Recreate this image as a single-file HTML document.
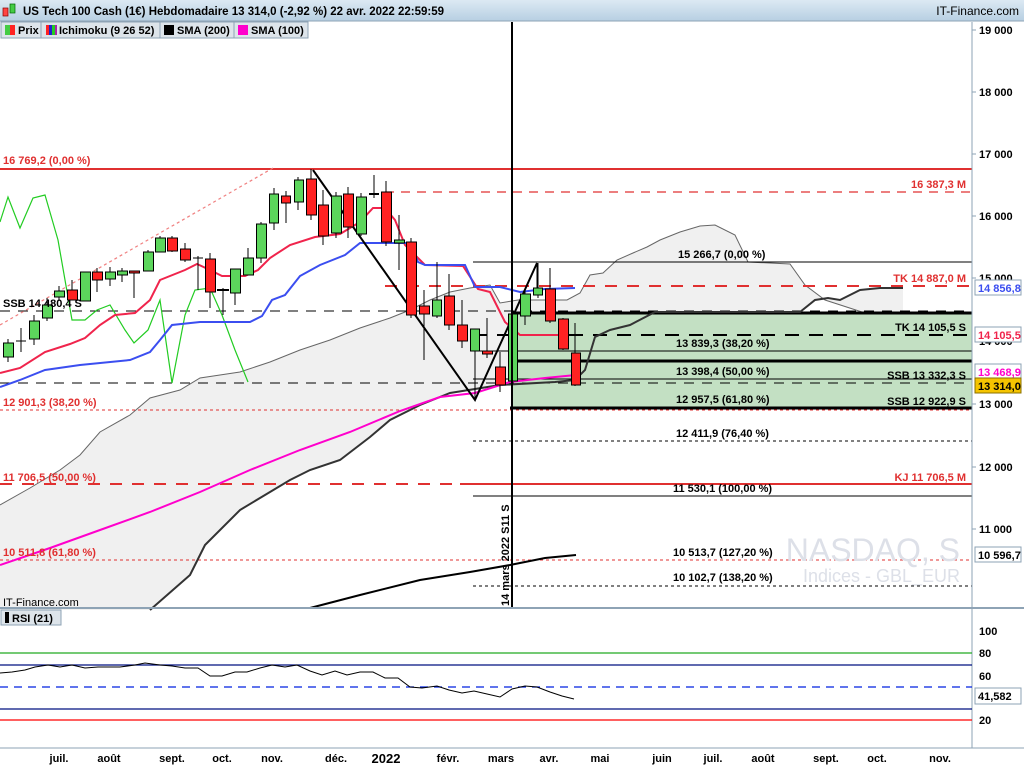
<!DOCTYPE html>
<html><head><meta charset="utf-8"><style>
body{margin:0;width:1024px;height:768px;overflow:hidden;background:#fff;font-family:"Liberation Sans",sans-serif}
svg{display:block;font-family:"Liberation Sans",sans-serif;font-weight:bold;font-size:11px}
</style></head><body>
<svg width="1024" height="768" viewBox="0 0 1024 768">
<defs><linearGradient id="hd" x1="0" y1="0" x2="0" y2="1"><stop offset="0" stop-color="#dce9f3"/><stop offset="1" stop-color="#b7cfe2"/></linearGradient></defs>
<rect x="0" y="0" width="1024" height="21" fill="url(#hd)"/>
<line x1="0" y1="21" x2="1024" y2="21" stroke="#8ea3b5"/>
<rect x="3" y="8" width="5" height="8" fill="#f44" stroke="#800" stroke-width="0.7"/><rect x="10" y="4" width="5" height="9" fill="#4c4" stroke="#060" stroke-width="0.7"/>
<text x="23" y="15" font-size="11.5" fill="#000">US Tech 100 Cash (1€) Hebdomadaire 13 314,0 (-2,92 %) 22 avr. 2022 22:59:59</text>
<text x="1019" y="15" font-size="12" text-anchor="end" font-weight="normal" fill="#000">IT-Finance.com</text>

<polygon fill="#f0f0f0" points="0,505 30,488 60,470 80,455 100,432 130,415 150,398 180,390 200,378 240,372 270,362 300,350 330,340 360,328 390,318 410,310 430,300 450,292 470,288 490,285 500,303 518,300 567,300 580,293 590,275 603,273 617,260 633,253 647,247 660,240 680,232 700,226 715,225 735,235 748,262 790,264 805,285 825,300 862,312 903,312 903,288 880,288 860,290 840,300 828,298 815,300 800,312 655,312 630,325 610,330 595,337 585,370 575,380 555,382 500,385 450,393 420,405 390,420 370,437 340,460 310,470 290,480 265,495 240,510 205,545 190,575 150,610 0,610"/>
<polyline fill="none" stroke="#666" stroke-width="1" points="0,505 30,488 60,470 80,455 100,432 130,415 150,398 180,390 200,378 240,372 270,362 300,350 330,340 360,328 390,318 410,310 430,300 450,292 470,288 490,285 500,303 518,300 567,300 580,293 590,275 603,273 617,260 633,253 647,247 660,240 680,232 700,226 715,225 735,235 748,262 790,264 805,285 825,300 862,312"/>

<rect x="513" y="313" width="459" height="96" fill="#c3e0c3"/>

<line x1="0" y1="169" x2="972" y2="169" stroke="#e03030" stroke-width="2"/>
<line x1="385" y1="192" x2="972" y2="192" stroke="#e03030" stroke-width="1.2" stroke-dasharray="9,7"/>
<line x1="473" y1="262" x2="972" y2="262" stroke="#000" stroke-width="1"/>
<line x1="385" y1="286" x2="972" y2="286" stroke="#e03030" stroke-width="2" stroke-dasharray="12,10"/>
<line x1="0" y1="311" x2="972" y2="311" stroke="#000" stroke-width="1" stroke-dasharray="10,8"/>
<line x1="513" y1="313" x2="972" y2="313" stroke="#000" stroke-width="3"/>
<line x1="473" y1="335" x2="972" y2="335" stroke="#000" stroke-width="2" stroke-dasharray="14,10"/>
<line x1="473" y1="351" x2="972" y2="351" stroke="#000" stroke-width="1"/>
<line x1="510" y1="361" x2="972" y2="361" stroke="#000" stroke-width="3"/>
<line x1="473" y1="379" x2="972" y2="379" stroke="#000" stroke-width="1"/>
<line x1="0" y1="383" x2="972" y2="383" stroke="#000" stroke-width="1" stroke-dasharray="10,8"/>
<line x1="510" y1="408" x2="972" y2="408" stroke="#000" stroke-width="3"/>
<line x1="0" y1="410" x2="972" y2="410" stroke="#e03030" stroke-width="1" stroke-dasharray="3,3"/>
<line x1="473" y1="441" x2="972" y2="441" stroke="#000" stroke-width="1" stroke-dasharray="3,3"/>
<line x1="0" y1="484" x2="460" y2="484" stroke="#e03030" stroke-width="2" stroke-dasharray="12,10"/>
<line x1="460" y1="484" x2="972" y2="484" stroke="#e03030" stroke-width="2"/>
<line x1="473" y1="496" x2="972" y2="496" stroke="#000" stroke-width="1"/>
<line x1="0" y1="560" x2="972" y2="560" stroke="#e03030" stroke-width="1" stroke-dasharray="3,3"/>
<line x1="473" y1="586" x2="972" y2="586" stroke="#000" stroke-width="1" stroke-dasharray="3,3"/>

<line x1="0" y1="325" x2="273" y2="168" stroke="#f08080" stroke-width="1.2" stroke-dasharray="3,3"/>

<polyline fill="none" stroke="#333" stroke-width="2" points="150,610 190,575 205,545 240,510 265,495 290,480 310,470 340,460 370,437 390,420 420,405 450,393 500,385 555,382 575,380 585,370 595,337 610,330 630,325 655,312 800,312 815,300 828,298 840,300 860,290 880,288 903,288"/>

<polyline fill="none" stroke="#2c2" stroke-width="1.2" points="0,222 8,197 20,228 33,198 45,195 58,240 72,320 85,320 97,310 110,305 125,330 134,343 148,330 160,300 172,383 185,315 195,290 210,288 222,315 235,350 248,382"/>
<polyline fill="none" stroke="#f0244c" stroke-width="2" points="0,373 20,368 45,352 70,344 85,338 100,325 115,315 135,313 150,300 160,280 185,270 197,264 210,270 222,276 245,276 258,270 270,258 290,245 315,237 340,234 360,222 373,208 385,208 395,220 405,245 415,255 425,265 463,266 478,289 490,292 505,322 520,335 568,335"/>
<polyline fill="none" stroke="#3b4ef0" stroke-width="2" points="0,387 20,380 45,370 80,365 130,360 150,352 160,340 172,325 200,322 250,322 262,316 272,300 285,295 300,276 320,265 345,255 360,243 410,243 418,262 425,265 465,265 475,287 500,287 520,292 545,289 575,288"/>
<polyline fill="none" stroke="#f0c" stroke-width="2" points="0,565 50,548 100,530 150,512 200,492 250,470 300,450 350,432 400,411 440,397 475,393 510,382 545,378 576,375"/>
<polyline fill="none" stroke="#000" stroke-width="2" points="310,608 360,595 420,580 470,572 510,565 545,558 576,555"/>
<polyline fill="none" stroke="#000" stroke-width="2" points="313,170 475,400 537,263"/>
<line x1="537" y1="263" x2="537" y2="290" stroke="#000" stroke-width="1"/>

<g stroke="#000" stroke-width="1">
<line x1="8" y1="339" x2="8" y2="362"/><rect x="3.5" y="343" width="10" height="14" fill="#5cd65c"/>
<line x1="21" y1="328" x2="21" y2="352"/><line x1="16" y1="341" x2="26" y2="341"/>
<line x1="34" y1="315" x2="34" y2="345"/><rect x="29.5" y="321" width="10" height="18" fill="#5cd65c"/>
<line x1="47" y1="298" x2="47" y2="321"/><rect x="42.5" y="305" width="10" height="13" fill="#5cd65c"/>
<line x1="59" y1="286" x2="59" y2="300"/><rect x="54.5" y="291" width="10" height="6" fill="#5cd65c"/>
<line x1="72" y1="280" x2="72" y2="300"/><rect x="67.5" y="290" width="10" height="10" fill="#f22"/>
<line x1="85" y1="272" x2="85" y2="301"/><rect x="80.5" y="272" width="10" height="29" fill="#5cd65c"/>
<line x1="97" y1="268" x2="97" y2="292"/><rect x="92.5" y="272" width="10" height="8" fill="#f22"/>
<line x1="110" y1="267" x2="110" y2="286"/><rect x="105.5" y="272" width="10" height="7" fill="#5cd65c"/>
<line x1="122" y1="268" x2="122" y2="282"/><rect x="117.5" y="271" width="10" height="4" fill="#5cd65c"/>
<line x1="134" y1="271" x2="134" y2="298"/><rect x="129.5" y="271" width="10" height="2" fill="#f22"/>
<line x1="148" y1="250" x2="148" y2="271"/><rect x="143.5" y="252" width="10" height="19" fill="#5cd65c"/>
<line x1="160" y1="236" x2="160" y2="252"/><rect x="155.5" y="238" width="10" height="14" fill="#5cd65c"/>
<line x1="172" y1="236" x2="172" y2="252"/><rect x="167.5" y="238" width="10" height="13" fill="#f22"/>
<line x1="185" y1="243" x2="185" y2="262"/><rect x="180.5" y="249" width="10" height="11" fill="#f22"/>
<line x1="198" y1="256" x2="198" y2="290"/><line x1="193" y1="258" x2="203" y2="258"/>
<line x1="210" y1="253" x2="210" y2="308"/><rect x="205.5" y="259" width="10" height="33" fill="#f22"/>
<line x1="223" y1="288" x2="223" y2="315"/><line x1="217" y1="290" x2="229" y2="290" stroke-width="2"/>
<line x1="235" y1="269" x2="235" y2="305"/><rect x="230.5" y="269" width="10" height="24" fill="#5cd65c"/>
<line x1="248" y1="248" x2="248" y2="275"/><rect x="243.5" y="258" width="10" height="17" fill="#5cd65c"/>
<line x1="261" y1="222" x2="261" y2="263"/><rect x="256.5" y="224" width="10" height="34" fill="#5cd65c"/>
<line x1="274" y1="188" x2="274" y2="230"/><rect x="269.5" y="194" width="9" height="29" fill="#5cd65c"/>
<line x1="286" y1="191" x2="286" y2="223"/><rect x="281.5" y="196" width="9" height="7" fill="#f22"/>
<line x1="298" y1="177" x2="298" y2="210"/><rect x="294.5" y="180" width="9" height="22" fill="#5cd65c"/>
<line x1="311" y1="169" x2="311" y2="220"/><rect x="306.5" y="179" width="10" height="36" fill="#f22"/>
<line x1="323" y1="190" x2="323" y2="245"/><rect x="318.5" y="205" width="10" height="31" fill="#f22"/>
<line x1="336" y1="192" x2="336" y2="238"/><rect x="331.5" y="196" width="10" height="37" fill="#5cd65c"/>
<line x1="348" y1="187" x2="348" y2="238"/><rect x="343.5" y="194" width="10" height="33" fill="#f22"/>
<line x1="361" y1="193" x2="361" y2="236"/><rect x="356.5" y="197" width="10" height="37" fill="#5cd65c"/>
<line x1="374" y1="175" x2="374" y2="198"/><line x1="369" y1="194" x2="379" y2="194" stroke-width="2"/>
<line x1="386" y1="181" x2="386" y2="246"/><rect x="381.5" y="192" width="10" height="50" fill="#f22"/>
<line x1="399" y1="215" x2="399" y2="270"/><rect x="394.5" y="240" width="10" height="3" fill="#5cd65c"/>
<line x1="411" y1="238" x2="411" y2="318"/><rect x="406.5" y="242" width="10" height="73" fill="#f22"/>
<line x1="424" y1="290" x2="424" y2="360"/><rect x="419.5" y="306" width="10" height="8" fill="#f22"/>
<line x1="437" y1="262" x2="437" y2="318"/><rect x="432.5" y="300" width="9" height="16" fill="#5cd65c"/>
<line x1="449" y1="274" x2="449" y2="330"/><rect x="444.5" y="296" width="10" height="29" fill="#f22"/>
<line x1="462" y1="300" x2="462" y2="348"/><rect x="457.5" y="325" width="10" height="16" fill="#f22"/>
<line x1="475" y1="330" x2="475" y2="400"/><rect x="470.5" y="329" width="9" height="22" fill="#5cd65c"/>
<line x1="487" y1="318" x2="487" y2="358"/><rect x="482.5" y="351" width="10" height="3" fill="#f22"/>
<line x1="500" y1="352" x2="500" y2="392"/><rect x="495.5" y="367" width="10" height="18" fill="#f22"/>
<line x1="512" y1="305" x2="512" y2="388"/><rect x="508.5" y="314" width="9" height="67" fill="#5cd65c"/>
<line x1="525" y1="290" x2="525" y2="325"/><rect x="520.5" y="294" width="10" height="22" fill="#5cd65c"/>
<line x1="538" y1="263" x2="538" y2="298"/><rect x="533.5" y="288" width="9" height="7" fill="#5cd65c"/>
<line x1="550" y1="268" x2="550" y2="323"/><rect x="545.5" y="289" width="10" height="32" fill="#f22"/>
<line x1="563" y1="318" x2="563" y2="350"/><rect x="558.5" y="319" width="10" height="30" fill="#f22"/>
<line x1="575" y1="323" x2="575" y2="386"/><rect x="571.5" y="353" width="9" height="32" fill="#f22"/>
</g>

<line x1="512" y1="22" x2="512" y2="608" stroke="#000" stroke-width="2"/>
<text transform="translate(509,606) rotate(-90)" fill="#000">14 mars 2022 S11 S</text>

<text x="960" y="561" font-size="32" text-anchor="end" fill="#dde0e8" font-weight="normal">NASDAQ, S</text>
<text x="960" y="582" font-size="18" text-anchor="end" fill="#dde0e8" font-weight="normal">Indices - GBL_EUR</text>

<g>
<text x="3" y="164" fill="#e03030">16 769,2 (0,00 %)</text>
<text x="966" y="188" fill="#e03030" text-anchor="end">16 387,3 M</text>
<text x="678" y="258" fill="#000">15 266,7 (0,00 %)</text>
<text x="966" y="282" fill="#e03030" text-anchor="end">TK 14 887,0 M</text>
<text x="3" y="307" fill="#000">SSB 14 480,4 S</text>
<text x="966" y="331" fill="#000" text-anchor="end">TK 14 105,5 S</text>
<text x="676" y="347" fill="#000">13 839,3 (38,20 %)</text>
<text x="676" y="375" fill="#000">13 398,4 (50,00 %)</text>
<text x="966" y="379" fill="#000" text-anchor="end">SSB 13 332,3 S</text>
<text x="3" y="406" fill="#e03030">12 901,3 (38,20 %)</text>
<text x="676" y="403" fill="#000">12 957,5 (61,80 %)</text>
<text x="966" y="405" fill="#000" text-anchor="end">SSB 12 922,9 S</text>
<text x="676" y="437" fill="#000">12 411,9 (76,40 %)</text>
<text x="3" y="481" fill="#e03030">11 706,5 (50,00 %)</text>
<text x="966" y="481" fill="#e03030" text-anchor="end">KJ 11 706,5 M</text>
<text x="673" y="492" fill="#000">11 530,1 (100,00 %)</text>
<text x="3" y="556" fill="#e03030">10 511,8 (61,80 %)</text>
<text x="673" y="556" fill="#000">10 513,7 (127,20 %)</text>
<text x="673" y="581" fill="#000">10 102,7 (138,20 %)</text>
<text x="3" y="606" fill="#000" font-weight="normal">IT-Finance.com</text>
</g>

<g>
<rect x="1" y="22" width="307" height="16" fill="#dde4ea" stroke="#8ea3b5"/>
<rect x="5" y="25" width="5" height="10" fill="#4c4"/><rect x="10" y="25" width="5" height="10" fill="#f22"/>
<text x="18" y="34" fill="#000">Prix</text>
<line x1="41" y1="22" x2="41" y2="38" stroke="#8ea3b5"/>
<rect x="46" y="25" width="3" height="10" fill="#f22"/><rect x="49" y="25" width="3" height="10" fill="#22c"/><rect x="52" y="25" width="3" height="10" fill="#2c2"/><rect x="55" y="25" width="2" height="10" fill="#a2a"/>
<text x="59" y="34" fill="#000">Ichimoku (9 26 52)</text>
<line x1="160" y1="22" x2="160" y2="38" stroke="#8ea3b5"/>
<rect x="164" y="25" width="10" height="10" fill="#000"/>
<text x="177" y="34" fill="#000">SMA (200)</text>
<line x1="234" y1="22" x2="234" y2="38" stroke="#8ea3b5"/>
<rect x="238" y="25" width="10" height="10" fill="#f0c"/>
<text x="251" y="34" fill="#000">SMA (100)</text>
</g>

<rect x="973" y="22" width="51" height="746" fill="#fff"/>
<line x1="972" y1="22" x2="972" y2="748" stroke="#8ea3b5"/>
<g fill="#000">
<line x1="972" y1="30" x2="976" y2="30" stroke="#8ea3b5"/><text x="979" y="34">19 000</text>
<line x1="972" y1="92" x2="976" y2="92" stroke="#8ea3b5"/><text x="979" y="96">18 000</text>
<line x1="972" y1="154" x2="976" y2="154" stroke="#8ea3b5"/><text x="979" y="158">17 000</text>
<line x1="972" y1="216" x2="976" y2="216" stroke="#8ea3b5"/><text x="979" y="220">16 000</text>
<line x1="972" y1="278" x2="976" y2="278" stroke="#8ea3b5"/><text x="979" y="282">15 000</text>
<text x="979" y="345">14 000</text>
<line x1="972" y1="404" x2="976" y2="404" stroke="#8ea3b5"/><text x="979" y="408">13 000</text>
<line x1="972" y1="467" x2="976" y2="467" stroke="#8ea3b5"/><text x="979" y="471">12 000</text>
<line x1="972" y1="529" x2="976" y2="529" stroke="#8ea3b5"/><text x="979" y="533">11 000</text>
</g>
<rect x="975" y="280" width="46" height="15" fill="#fff" stroke="#8ea3b5"/><text x="978" y="292" fill="#3b4ef0">14 856,8</text>
<rect x="975" y="327" width="46" height="15" fill="#fff" stroke="#8ea3b5"/><text x="978" y="339" fill="#f0244c">14 105,5</text>
<rect x="975" y="364" width="46" height="15" fill="#fff" stroke="#8ea3b5"/><text x="978" y="376" fill="#f0c">13 468,9</text>
<rect x="975" y="378" width="46" height="15" fill="#f5c400" stroke="#8a7000"/><text x="978" y="390" fill="#000">13 314,0</text>
<rect x="975" y="547" width="46" height="15" fill="#fff" stroke="#8ea3b5"/><text x="978" y="559" fill="#000">10 596,7</text>

<line x1="0" y1="608" x2="1024" y2="608" stroke="#8ea3b5" stroke-width="2"/>

<rect x="1" y="610" width="60" height="15" fill="#dde4ea" stroke="#8ea3b5"/>
<rect x="5" y="612" width="4" height="11" fill="#000"/>
<text x="12" y="622" fill="#000">RSI (21)</text>
<line x1="0" y1="653" x2="972" y2="653" stroke="#2a2" stroke-width="1.2"/>
<line x1="0" y1="665" x2="972" y2="665" stroke="#001080" stroke-width="1.2"/>
<line x1="0" y1="687" x2="972" y2="687" stroke="#0020e0" stroke-width="1.2" stroke-dasharray="8,6"/>
<line x1="0" y1="709" x2="972" y2="709" stroke="#001080" stroke-width="1.2"/>
<line x1="0" y1="720" x2="972" y2="720" stroke="#f00" stroke-width="1.2"/>
<polyline fill="none" stroke="#000" stroke-width="1" points="0,673 12,672 25,670 35,667 48,665 60,667 72,665 85,668 98,667 120,667 135,665 145,663 160,665 172,666 185,668 198,668 210,676 222,676 235,672 247,672 260,668 272,665 285,667 297,665 310,671 322,675 335,671 347,675 360,672 373,672 385,678 398,678 410,687 422,688 437,686 449,690 462,693 474,691 487,694 500,697 512,689 525,686 537,687 550,692 562,696 574,699"/>
<rect x="975" y="688" width="46" height="16" fill="#fff" stroke="#8ea3b5"/><text x="978" y="700" fill="#000">41,582</text>
<g fill="#000">
<text x="979" y="635">100</text><text x="979" y="657">80</text><text x="979" y="680">60</text><text x="979" y="724">20</text>
</g>

<line x1="0" y1="748" x2="1024" y2="748" stroke="#8ea3b5"/>
<g fill="#000" text-anchor="middle">
<text x="59" y="762">juil.</text><text x="109" y="762">août</text><text x="172" y="762">sept.</text><text x="222" y="762">oct.</text><text x="272" y="762">nov.</text><text x="336" y="762">déc.</text><text x="386" y="763" font-size="13">2022</text><text x="448" y="762">févr.</text><text x="501" y="762">mars</text><text x="549" y="762">avr.</text><text x="600" y="762">mai</text><text x="662" y="762">juin</text><text x="713" y="762">juil.</text><text x="763" y="762">août</text><text x="826" y="762">sept.</text><text x="877" y="762">oct.</text><text x="940" y="762">nov.</text>
</g>
</svg>
</body></html>
